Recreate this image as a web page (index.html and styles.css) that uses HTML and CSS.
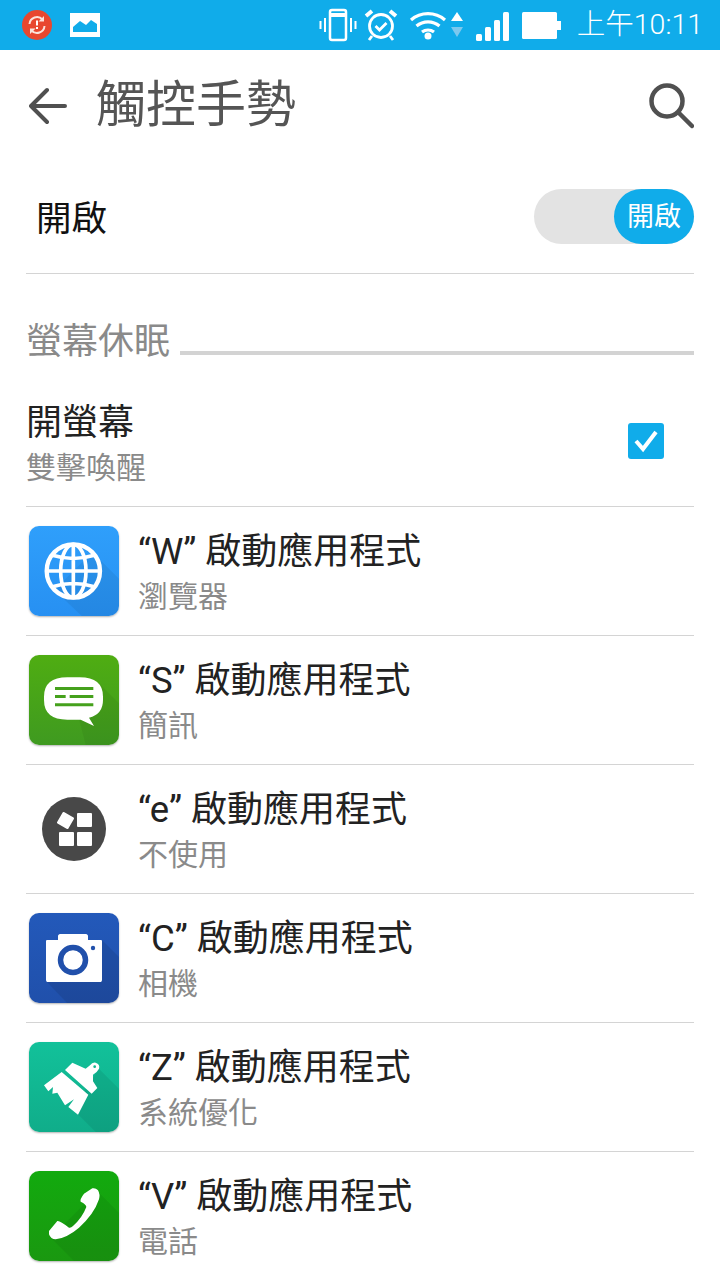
FILE: index.html
```html
<!DOCTYPE html>
<html lang="zh-Hant">
<head>
    <meta charset="UTF-8">
    <title>觸控手勢</title>
    <link rel="stylesheet" href="styles.css">
</head>
<body>
    <div class="status-bar">
        <div class="status-left">
            <svg width="32" height="32" viewBox="0 0 32 32">
                <circle cx="16" cy="16" r="15" fill="#e8472f"/>
                <path d="M8.500 15a7.500 7.500 0 0 1 13-4.500M23.500 17a7.500 7.500 0 0 1-13 4.500" fill="none" stroke="#fbe3dc" stroke-width="2"/>
                <path d="M23 7v5.500h-5.500zM9 25v-5.500h5.500z" fill="#fbe3dc"/>
                <rect x="15" y="11.500" width="2" height="5" fill="#fff"/>
                <rect x="15" y="18" width="2" height="2" fill="#fff"/>
            </svg>
            <svg width="30" height="24" viewBox="0 0 30 24">
                <rect width="30" height="24" fill="#fff"/>
                <path d="M3 19v-5l7-6 6 4 5-5 6 4v8z" fill="#10acea"/>
            </svg>
        </div>
        <div class="status-right">
            <svg width="38" height="34" viewBox="0 0 38 34" fill="none" stroke="#fff">
                <rect x="11" y="2" width="16" height="30" rx="2" stroke-width="2.500"/>
                <path d="M11 7h16" stroke-width="4"/>
                <path d="M6 10v14M1.500 13v8M32 10v14M36.500 13v8" stroke-width="2"/>
            </svg>
            <svg class="ic-alarm" width="34" height="34" viewBox="0 0 34 34" fill="none" stroke="#fff">
                <circle cx="17" cy="18" r="11.500" stroke-width="2.800"/>
                <path d="M11.500 18l4 4 7-7" stroke-width="2.800"/>
                <path d="M2 8l6-5M32 8l-6-5" stroke-width="4"/>
                <path d="M8 28l-3 4M26 28l3 4" stroke-width="2.800"/>
            </svg>
            <svg class="ic-wifi" width="38" height="32" viewBox="0 0 38 32" fill="none" stroke="#fff" stroke-width="3.200">
                <path d="M2 11a26 26 0 0 1 34 0M7.500 17a18 18 0 0 1 23 0M13 23a10 10 0 0 1 12 0"/>
                <circle cx="19" cy="27" r="3.500" fill="#fff" stroke="none"/>
            </svg>
            <svg class="ic-updown" width="12" height="26" viewBox="0 0 12 26">
                <path d="M6 0l6 9H0z" fill="#fff"/>
                <path d="M0 15h12l-6 10z" fill="#7cc8ee"/>
            </svg>
            <svg class="ic-signal" width="33" height="30" viewBox="0 0 33 30" fill="#fff">
                <rect x="0" y="23" width="6" height="7" rx="1.500"/>
                <rect x="9" y="16" width="6" height="14" rx="1.500"/>
                <rect x="18" y="9" width="6" height="21" rx="1.500"/>
                <rect x="27" y="1" width="6" height="29" rx="1.500"/>
            </svg>
            <svg class="ic-battery" width="39" height="27" viewBox="0 0 39 27" fill="#fff">
                <rect width="35" height="27" rx="1.500"/>
                <rect x="35" y="9" width="4" height="9"/>
            </svg>
            <span class="clock">上午10:11</span>
        </div>
    </div>

    <header class="app-bar">
        <svg class="back" width="38" height="38" viewBox="0 0 38 38" fill="none" stroke="#505050" stroke-width="4" stroke-linecap="round" stroke-linejoin="round">
            <path d="M2 19h34M18 3L2 19l16 16"/>
        </svg>
        <h1>觸控手勢</h1>
        <svg class="search" width="46" height="46" viewBox="0 0 46 46" fill="none" stroke="#505050" stroke-linecap="round">
            <circle cx="19" cy="18" r="15.500" stroke-width="4.500"/>
            <path d="M31 30l13 13" stroke-width="4.500"/>
        </svg>
    </header>

    <div class="master-row">
        <span class="master-label">開啟</span>
        <div class="switch"><span class="switch-thumb">開啟</span></div>
    </div>

    <div class="section-head">
        <span>螢幕休眠</span>
        <div class="section-line"></div>
    </div>

    <div class="wake-row">
        <div class="row-text">
            <div class="row-title">開螢幕</div>
            <div class="row-sub">雙擊喚醒</div>
        </div>
        <div class="checkbox">
            <svg width="26" height="24" viewBox="0 0 26 24" fill="none" stroke="#fff" stroke-width="4"><path d="M3 12l7 8L23 3"/></svg>
        </div>
    </div>

    <div class="gesture-row">
        <div class="app-icon icon-browser">
            <svg width="90" height="90" viewBox="0 0 270 270">
                <path d="M190 78L270 158V270H158L76 192z" fill="#000" opacity="0.06"/>
                <g fill="none" stroke="#fff" stroke-width="11">
                    <circle cx="133" cy="135" r="80" stroke-width="13"/>
                    <ellipse cx="133" cy="135" rx="38" ry="80"/>
                    <path d="M133 55v160M53 135h160M70 88c40 12 86 12 126 0M70 182c40-12 86-12 126 0"/>
                </g>
            </svg>
        </div>
        <div class="row-text">
            <div class="row-title"><span class="gesture-key">“W”</span> 啟動應用程式</div>
            <div class="row-sub">瀏覽器</div>
        </div>
    </div>

    <div class="gesture-row">
        <div class="app-icon icon-sms">
            <svg width="90" height="90" viewBox="0 0 270 270">
                <path d="M205 80L270 145V270H170L150 192z" fill="#000" opacity="0.05"/>
                <path d="M115 67H152Q222 67 222 125V135Q222 178 180 188L195 213L155 194H115Q45 194 45 135V125Q45 67 115 67z" fill="#fff"/>
                <path d="M78 96h115v9H78zM78 120h32v9H78zM122 120h71v9H122zM78 145h115v9H78z" fill="#45a11c"/>
            </svg>
        </div>
        <div class="row-text">
            <div class="row-title"><span class="gesture-key">“S”</span> 啟動應用程式</div>
            <div class="row-sub">簡訊</div>
        </div>
    </div>

    <div class="gesture-row">
        <div class="app-icon icon-none">
            <svg width="64" height="64" viewBox="0 0 64 64">
                <circle cx="32" cy="32" r="32" fill="#484848"/>
                <rect x="17" y="17" width="13" height="13" rx="1" transform="rotate(30 23.500 23.500)" fill="#fff"/>
                <rect x="35" y="16" width="15" height="14" rx="1" fill="#fff"/>
                <rect x="17" y="35" width="15" height="14" rx="1" fill="#fff"/>
                <rect x="35" y="35" width="15" height="14" rx="1" fill="#fff"/>
            </svg>
        </div>
        <div class="row-text">
            <div class="row-title"><span class="gesture-key">“e”</span> 啟動應用程式</div>
            <div class="row-sub">不使用</div>
        </div>
    </div>

    <div class="gesture-row">
        <div class="app-icon icon-camera">
            <svg width="90" height="90" viewBox="0 0 90 90">
                <path d="M73 27L90 44V90H38L18 69z" fill="#000" opacity="0.09"/>
                <g transform="translate(17 21)">
                    <path d="M1 6h11V2c0-1 1-2 2-2h26c1 0 2 1 2 2v4h13c1 0 1 1 1 1v39c0 1-1 2-1 2H1s-1-1-1-2V7s0-1 1-1z" fill="#fff"/>
                    <circle cx="27" cy="26" r="12.500" fill="none" stroke="#2150ab" stroke-width="5.500"/>
                    <circle cx="47" cy="14" r="2.200" fill="#2150ab"/>
                </g>
            </svg>
        </div>
        <div class="row-text">
            <div class="row-title"><span class="gesture-key">“C”</span> 啟動應用程式</div>
            <div class="row-sub">相機</div>
        </div>
    </div>

    <div class="gesture-row">
        <div class="app-icon icon-clean">
            <svg width="90" height="90" viewBox="0 0 270 270">
                <path d="M210 80L270 140V270H200L130 200z" fill="#000" opacity="0.07"/>
                <path d="M45 130L98 90L178 158L147 218L118 195L135 172L108 190L85 152L70 155L72 135L58 148z" fill="#fff"/>
                <path d="M108 84L130 62L170 80L183 70Q190 60 200 62Q214 66 210 80Q205 90 192 98L192 118L205 138L188 155z" fill="#fff"/>
                <circle cx="197" cy="74" r="4" fill="#10b48e"/>
            </svg>
        </div>
        <div class="row-text">
            <div class="row-title"><span class="gesture-key">“Z”</span> 啟動應用程式</div>
            <div class="row-sub">系統優化</div>
        </div>
    </div>

    <div class="gesture-row">
        <div class="app-icon icon-phone">
            <svg width="90" height="90" viewBox="0 0 270 270">
                <path d="M205 60L270 125V270H135L65 200z" fill="#000" opacity="0.06"/>
                <path d="M165 68L190 52Q200 50 207 58Q214 70 210 85Q195 130 150 170Q115 200 80 205Q65 205 60 190L60 180L85 150Q92 148 120 170Q125 172 132 165Q160 140 172 108Q172 100 155 92Q152 85 165 68z" fill="#fff"/>
            </svg>
        </div>
        <div class="row-text">
            <div class="row-title"><span class="gesture-key">“V”</span> 啟動應用程式</div>
            <div class="row-sub">電話</div>
        </div>
    </div>
</body>
</html>
```

FILE: styles.css
```css
html, body {
    height: 100%;
}
body {
    margin: 0;
    height: 1280px;
    overflow: hidden;
    background-color: #fff;
    font-family: Roboto, "Noto Sans CJK TC", sans-serif;
    color: #222;
}

/* status bar */
.status-bar {
    height: 50px;
    background-color: #10acea;
    display: flex;
    justify-content: space-between;
    align-items: center;
    padding: 0 17px 0 21px;
    box-sizing: border-box;
}
.status-left {
    display: flex;
    align-items: center;
    gap: 17px;
}
.status-left svg, .status-right svg {
    display: block;
}
.status-right {
    display: flex;
    align-items: center;
}
.ic-alarm {
    margin-left: 7px;
}
.ic-wifi {
    margin-left: 11px;
}
.ic-updown {
    margin-left: 4px;
}
.ic-signal {
    margin-left: 13px;
    margin-top: 2px;
}
.ic-battery {
    margin-left: 13px;
}
.clock {
    margin-left: 16px;
    color: #fff;
    font-size: 28.500px;
    line-height: 50px;
    font-weight: 300;
    white-space: nowrap;
}

/* app bar */
.app-bar {
    height: 110px;
    display: flex;
    align-items: center;
    padding: 0 26px 0 29px;
    box-sizing: border-box;
}
.app-bar h1 {
    flex: 1;
    margin: 0 0 0 29px;
    font-size: 50px;
    font-weight: 400;
    color: #555;
    line-height: 64px;
}
.back {
    margin-top: 2px;
}
.search {
    margin-top: 1px;
}

/* master switch */
.master-row {
    height: 114px;
    margin: 0 26px;
    box-sizing: border-box;
    border-bottom: 1px solid #d4d4d4;
    display: flex;
    justify-content: space-between;
    align-items: center;
    padding: 0 0 3px 10px;
}
.master-label {
    font-size: 35.500px;
    color: #111;
}
.switch {
    width: 160px;
    height: 55px;
    margin-top: 2px;
    border-radius: 28px;
    background-color: #e3e3e3;
    display: flex;
    justify-content: flex-end;
}
.switch-thumb {
    width: 80px;
    height: 55px;
    border-radius: 28px;
    background-color: #10acea;
    color: #fff;
    font-size: 27px;
    line-height: 56px;
    text-align: center;
}

/* section header */
.section-head {
    height: 101px;
    margin: 0 26px 0 26px;
    display: flex;
    align-items: flex-start;
    padding-top: 44px;
    box-sizing: border-box;
    color: #8a8a8a;
    font-size: 36px;
    line-height: 48px;
}
.section-line {
    flex: 1;
    height: 4px;
    margin: 33px 0 0 10px;
    background-color: #d3d3d3;
}

/* rows */
.wake-row {
    height: 132px;
    margin: 0 26px;
    box-sizing: border-box;
    border-bottom: 1px solid #d4d4d4;
    display: flex;
    align-items: center;
    justify-content: space-between;
    padding: 0 30px 0 0;
}
.wake-row .row-text {
    padding-top: 7px;
}
.gesture-row {
    height: 129px;
    margin: 0 26px;
    box-sizing: border-box;
    border-bottom: 1px solid #d4d4d4;
    display: flex;
    align-items: center;
    padding-left: 3px;
}
.gesture-row:last-child {
    border-bottom-color: transparent;
}
.row-text {
    display: flex;
    flex-direction: column;
}
.gesture-row .row-text {
    margin-left: 19px;
    padding-top: 4px;
}
.row-title {
    font-size: 36px;
    line-height: 44px;
    color: #222;
    white-space: nowrap;
}
.gesture-key {
    font-size: 36.500px;
}
.row-sub {
    font-size: 30px;
    line-height: 40px;
    color: #8a8a8a;
    margin-top: 3px;
}
.checkbox {
    width: 36px;
    height: 36px;
    margin-top: 1px;
    border-radius: 3px;
    background-color: #10acea;
    display: flex;
    align-items: center;
    justify-content: center;
}

/* launcher icons */
.app-icon {
    width: 90px;
    height: 90px;
    flex: none;
    border-radius: 10px;
    overflow: hidden;
    display: flex;
    align-items: center;
    justify-content: center;
    box-shadow: 0 1px 2px rgba(0, 0, 0, 0.3);
}
.icon-browser {
    background: linear-gradient(#2f9ffb, #2790f2);
}
.icon-sms {
    background: linear-gradient(#4fad12, #3f9a20);
}
.icon-none {
    box-shadow: none;
}
.icon-camera {
    background: linear-gradient(#2359ba, #2050ab);
}
.icon-clean {
    background: linear-gradient(#12c19a, #10ad8a);
}
.icon-phone {
    background: linear-gradient(#12aa0e, #1a9810);
}
```
